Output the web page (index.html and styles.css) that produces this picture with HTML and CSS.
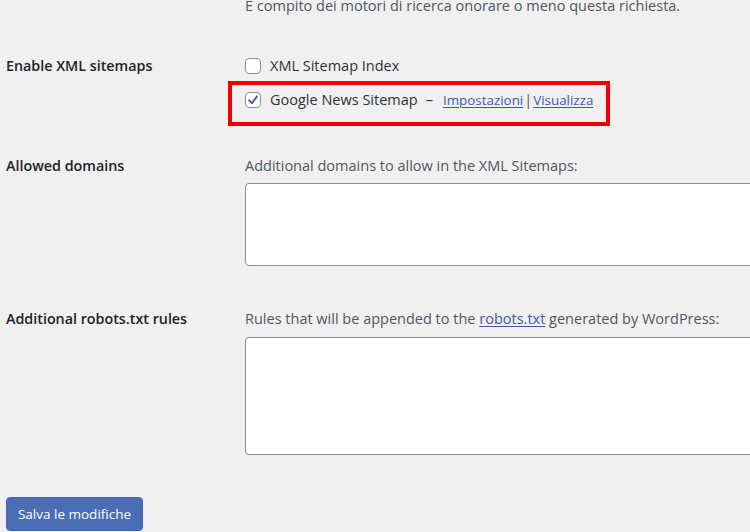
FILE: index.html
```html
<!DOCTYPE html>
<html lang="it">
<head>
<meta charset="utf-8">
<link rel="stylesheet" href="styles.css">
</head>
<body>
<div class="page">
  <div class="row row-top">
    <div class="label"></div>
    <div class="field">
      <p class="desc desc-top">È compito dei motori di ricerca onorare o meno questa richiesta.</p>
    </div>
  </div>

  <div class="row row-sitemaps">
    <div class="label">Enable XML sitemaps</div>
    <div class="field">
      <label class="check">
        <span class="box"></span>
        <span class="check-text">XML Sitemap Index</span>
      </label>
      <div class="highlight">
        <label class="check">
          <span class="box checked">
            <svg viewBox="0 0 16 16" width="16" height="16"><path d="M4.2 8.3 L6.9 11.2 L12 4.4" fill="none" stroke="#3b5fb6" stroke-width="1.9" stroke-linecap="round" stroke-linejoin="round"/></svg>
          </span>
          <span class="check-text">Google News Sitemap<span class="dash">–</span><a href="#" class="link link-small">Impostazioni</a><span class="pipe">|</span><a href="#" class="link link-small">Visualizza</a></span>
        </label>
      </div>
    </div>
  </div>

  <div class="row row-domains">
    <div class="label">Allowed domains</div>
    <div class="field">
      <p class="desc">Additional domains to allow in the XML Sitemaps:</p>
      <textarea class="input input-domains"></textarea>
    </div>
  </div>

  <div class="row row-robots">
    <div class="label">Additional robots.txt rules</div>
    <div class="field">
      <p class="desc">Rules that will be appended to the <a href="#" class="link">robots.txt</a> generated by WordPress:</p>
      <textarea class="input input-robots"></textarea>
    </div>
  </div>

  <div class="actions">
    <button class="button-primary" type="button">Salva le modifiche</button>
  </div>
</div>
</body>
</html>
```
FILE: styles.css
```css
html, body {
  margin: 0;
  padding: 0;
  background: #f0f0f1;
  overflow: hidden;
}
body {
  width: 750px;
  height: 532px;
  font-family: "Open Sans", "Noto Sans", sans-serif;
  font-size: 14.5px;
  line-height: 20px;
  color: #1d2327;
}
.page {
  padding-left: 6px;
}
.row {
  display: grid;
  grid-template-columns: 239px 560px;
}
.label {
  font-weight: 600;
  font-size: 14.3px;
  color: #1d2327;
}
.desc {
  margin: 0;
  color: #50575e;
  white-space: nowrap;
}
.desc-top {
  line-height: 11px;
}
.row-sitemaps {
  margin-top: 45px;
}
.check {
  display: flex;
  align-items: flex-start;
  gap: 9px;
  color: #2c3338;
  white-space: nowrap;
}
.box {
  box-sizing: border-box;
  width: 16px;
  height: 16px;
  margin-top: 1.5px;
  border: 1px solid #8c8f94;
  border-radius: 4px;
  background: #fff;
  flex: none;
  position: relative;
}
.box svg {
  position: absolute;
  left: -1px;
  top: -1px;
}
.highlight {
  box-sizing: border-box;
  width: 382px;
  height: 45px;
  margin-top: 5px;
  margin-left: -17px;
  padding: 5px 0 0 13px;
  border: 4px solid #f20000;
}
.dash {
  margin: 0 10px 0 8px;
}
.pipe {
  margin: 0 1px;
  color: #50575e;
}
.link {
  color: #3d5ba9;
  text-decoration: underline;
  text-underline-offset: 2px;
  text-decoration-thickness: 1px;
}
.link-small {
  font-size: 13.4px;
}
.row-domains {
  margin-top: 30px;
}
.input {
  display: block;
  box-sizing: border-box;
  width: 560px;
  margin: 0;
  padding: 4px 8px;
  border: 1px solid #8c8f94;
  border-radius: 4px;
  background: #fff;
  resize: none;
  font: inherit;
}
.input-domains {
  margin-top: 7px;
  height: 83px;
}
.row-robots {
  margin-top: 43px;
}
.input-robots {
  margin-top: 8px;
  height: 118px;
}
.actions {
  margin-top: 42px;
}
.button-primary {
  box-sizing: border-box;
  width: 137px;
  height: 34px;
  padding: 0;
  border: 1px solid #4467af;
  border-radius: 4px;
  background: #4a6db5;
  color: #fff;
  font-family: "Open Sans", "Noto Sans", sans-serif;
  font-size: 13.5px;
  cursor: pointer;
}
```
